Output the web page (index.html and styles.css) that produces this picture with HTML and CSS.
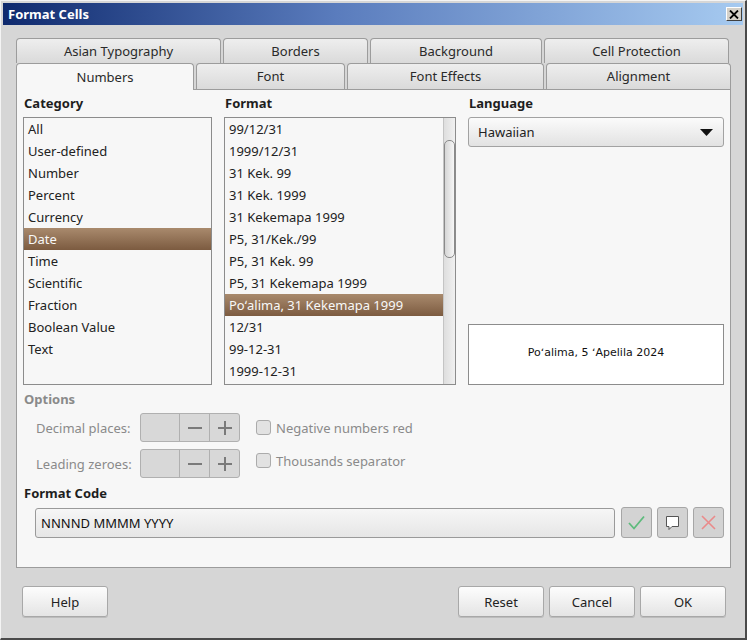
FILE: index.html
```html
<!DOCTYPE html>
<html lang="en">
<head>
  <meta charset="UTF-8">
  <title>Format Cells</title>
  <link rel="stylesheet" href="styles.css">
</head>
<body>
  <div class="window">
    <div class="titlebar">
      <span class="title">Format Cells</span>
      <div class="close">
        <svg width="10" height="9" viewBox="0 0 10 9"><path d="M1 0.5 L9 8.5 M9 0.5 L1 8.5" stroke="#000" stroke-width="1.8"/></svg>
      </div>
    </div>

    <div class="dialog">
      <div class="tabs">
        <div class="tab-row">
          <div class="tab w-asian">Asian Typography</div>
          <div class="tab w-borders">Borders</div>
          <div class="tab w-bg">Background</div>
          <div class="tab w-protect">Cell Protection</div>
        </div>
        <div class="tab-row front">
          <div class="tab active w-numbers">Numbers</div>
          <div class="tab w-font">Font</div>
          <div class="tab w-effects">Font Effects</div>
          <div class="tab w-align">Alignment</div>
        </div>
      </div>

      <div class="panel">
        <div class="columns">
          <div class="col col-cat">
            <div class="label">Category</div>
            <div class="list">
              <div class="rows">
                <div class="row">All</div>
                <div class="row">User-defined</div>
                <div class="row">Number</div>
                <div class="row">Percent</div>
                <div class="row">Currency</div>
                <div class="row selected">Date</div>
                <div class="row">Time</div>
                <div class="row">Scientific</div>
                <div class="row">Fraction</div>
                <div class="row">Boolean Value</div>
                <div class="row">Text</div>
              </div>
            </div>
          </div>

          <div class="col col-fmt">
            <div class="label">Format</div>
            <div class="list">
              <div class="rows">
                <div class="row">99/12/31</div>
                <div class="row">1999/12/31</div>
                <div class="row">31 Kek. 99</div>
                <div class="row">31 Kek. 1999</div>
                <div class="row">31 Kekemapa 1999</div>
                <div class="row">P5, 31/Kek./99</div>
                <div class="row">P5, 31 Kek. 99</div>
                <div class="row">P5, 31 Kekemapa 1999</div>
                <div class="row selected">Poʻalima, 31 Kekemapa 1999</div>
                <div class="row">12/31</div>
                <div class="row">99-12-31</div>
                <div class="row">1999-12-31</div>
              </div>
              <div class="scrollbar"><div class="thumb"></div></div>
            </div>
          </div>

          <div class="col col-lang">
            <div class="label">Language</div>
            <div class="dropdown">
              <span>Hawaiian</span>
              <svg width="13" height="7" viewBox="0 0 13 7"><path d="M0 0 H13 L6.5 7 Z" fill="#111"/></svg>
            </div>
            <div class="preview">Poʻalima, 5 ʻApelila 2024</div>
          </div>
        </div>

        <div class="label muted options-label">Options</div>
        <div class="opt-row">
          <span class="opt-label">Decimal places:</span>
          <div class="spin">
            <div class="spin-entry"></div>
            <div class="spin-btn"><svg width="14" height="14" viewBox="0 0 14 14"><path d="M0 7 H14" stroke="#7a7a7a" stroke-width="2"/></svg></div>
            <div class="spin-btn"><svg width="14" height="14" viewBox="0 0 14 14"><path d="M0 7 H14 M7 0 V14" stroke="#7a7a7a" stroke-width="2"/></svg></div>
          </div>
          <label class="check"><span class="box"></span>Negative numbers red</label>
        </div>
        <div class="opt-row">
          <span class="opt-label">Leading zeroes:</span>
          <div class="spin">
            <div class="spin-entry"></div>
            <div class="spin-btn"><svg width="14" height="14" viewBox="0 0 14 14"><path d="M0 7 H14" stroke="#7a7a7a" stroke-width="2"/></svg></div>
            <div class="spin-btn"><svg width="14" height="14" viewBox="0 0 14 14"><path d="M0 7 H14 M7 0 V14" stroke="#7a7a7a" stroke-width="2"/></svg></div>
          </div>
          <label class="check up"><span class="box"></span>Thousands separator</label>
        </div>

        <div class="label code-label">Format Code</div>
        <div class="code-row">
          <div class="code-entry">NNNND MMMM YYYY</div>
          <div class="icon-btn">
            <svg width="31" height="31" viewBox="0 0 31 31"><path d="M8 16 L13 21.5 L23 9.5" fill="none" stroke="#5dbb7c" stroke-width="1.8"/></svg>
          </div>
          <div class="icon-btn">
            <svg width="31" height="31" viewBox="0 0 31 31"><path d="M9.5 9.5 H21.5 V19.5 H15 L12 22.5 V19.5 H9.5 Z" fill="#fff" stroke="#555" stroke-width="1"/></svg>
          </div>
          <div class="icon-btn">
            <svg width="31" height="31" viewBox="0 0 31 31"><path d="M9 9 L22 22 M22 9 L9 22" stroke="#ea8a8a" stroke-width="1.6"/></svg>
          </div>
        </div>
      </div>

      <div class="footer">
        <div class="btn">Help</div>
        <div class="spacer"></div>
        <div class="btn">Reset</div>
        <div class="btn">Cancel</div>
        <div class="btn">OK</div>
      </div>
    </div>
  </div>
</body>
</html>
```

FILE: styles.css
```css
:root {
  --bg: #d6d6d6;
  --panel: #f7f7f7;
  --border: #9c9c9c;
  --text: #222222;
  --muted: #8a8a8a;
  --radius: 3px;
}

body {
  margin: 0;
  font-family: 'Noto Sans', 'DejaVu Sans', sans-serif;
  font-size: 13px;
  color: var(--text);
}

.window {
  width: 747px;
  height: 640px;
  box-sizing: border-box;
  background: var(--bg);
  border-top: 1px solid #f4f4f4;
  border-left: 1px solid #f4f4f4;
  border-right: 2px solid #4a4a4a;
  border-bottom: 2px solid #4a4a4a;
  padding: 2px 2px 0 2px;
  display: flex;
  flex-direction: column;
}

.titlebar {
  height: 22px;
  background: linear-gradient(to right, #0f2a6e, #5a7cbd 45%, #a6caf0);
  display: flex;
  align-items: center;
  justify-content: space-between;
  padding: 0 1px 0 5px;
}

.title {
  color: #ffffff;
  font-weight: bold;
  font-size: 13px;
}

.close {
  width: 16px;
  height: 14px;
  box-sizing: border-box;
  background: #d4d0c8;
  border-top: 1px solid #ffffff;
  border-left: 1px solid #ffffff;
  border-right: 1px solid #404040;
  border-bottom: 1px solid #404040;
  display: flex;
  align-items: center;
  justify-content: center;
}

.dialog {
  flex: 1;
  padding: 13px 12px 0 13px;
  display: flex;
  flex-direction: column;
}

/* tabs */
.tab-row {
  display: flex;
  gap: 2px;
}

.tab {
  height: 25px;
  box-sizing: border-box;
  border: 1px solid var(--border);
  border-bottom: none;
  border-radius: 4px 4px 0 0;
  background: linear-gradient(#eeeeee, #dadada);
  display: flex;
  align-items: center;
  justify-content: center;
  padding-bottom: 1px;
  color: #2a2a2a;
}

.front .tab {
  height: 26px;
}

.front .tab.active {
  height: 27px;
  margin-bottom: -1px;
  background: var(--panel);
  position: relative;
  z-index: 1;
}

.w-asian { width: 205px; }
.w-borders { width: 145px; }
.w-bg { width: 172px; }
.w-protect { width: 185px; }
.w-numbers { width: 178px; }
.w-font { width: 149px; }
.w-effects { width: 197px; }
.w-align { width: 185px; }

.panel {
  width: 715px;
  height: 479px;
  box-sizing: border-box;
  background: var(--panel);
  border: 1px solid var(--border);
  padding: 4px 6px 0 6px;
}

.label {
  font-weight: bold;
  line-height: 18px;
  color: #1e1e1e;
  padding-left: 1px;
  margin-bottom: 5px;
}

.label.muted {
  color: var(--muted);
}

.columns {
  display: flex;
  gap: 12px;
}

.col-cat { width: 189px; }
.col-fmt { width: 232px; }
.col-lang {
  width: 256px;
  display: flex;
  flex-direction: column;
}

.list {
  height: 268px;
  box-sizing: border-box;
  border: 1px solid #8c8c8c;
  background: var(--panel);
  display: flex;
  overflow: hidden;
}

.rows {
  flex: 1;
}

.row {
  height: 22px;
  line-height: 22px;
  padding-left: 4px;
  white-space: nowrap;
}

.row.selected {
  background: linear-gradient(#a98a6d, #7c5b40);
  color: #f8f8f8;
}

.scrollbar {
  width: 11px;
  border-left: 1px solid #c4c4c4;
  background: linear-gradient(to right, #dedede, #f0f0f0);
  padding-top: 22px;
}

.thumb {
  height: 118px;
  box-sizing: border-box;
  border: 1px solid #8a8a8a;
  border-radius: 5px;
  background: linear-gradient(to right, #d6d6d6, #f6f6f6);
}

.dropdown {
  height: 30px;
  box-sizing: border-box;
  border: 1px solid #a2a2a2;
  border-radius: var(--radius);
  background: linear-gradient(#fbfbfb, #e2e2e2);
  display: flex;
  align-items: center;
  justify-content: space-between;
  padding: 0 10px 0 9px;
}

.preview {
  margin-top: auto;
  height: 61px;
  box-sizing: border-box;
  border: 1px solid #8c8c8c;
  background: #ffffff;
  display: flex;
  align-items: center;
  justify-content: center;
  padding-bottom: 4px;
  font-family: 'DejaVu Sans', sans-serif;
  font-size: 11px;
  color: #111111;
}

/* options */
.options-label {
  margin-top: 5px;
}

.opt-row {
  display: flex;
  align-items: center;
  padding-left: 13px;
  height: 29px;
  margin-bottom: 7px;
}

.opt-label {
  width: 93px;
  margin-right: 11px;
  text-align: right;
  white-space: nowrap;
  color: var(--muted);
}

.spin {
  width: 100px;
  height: 29px;
  box-sizing: border-box;
  border: 1px solid #b0b0b0;
  border-radius: var(--radius);
  background: #d8d8d8;
  display: flex;
}

.spin-entry {
  width: 38px;
  border-right: 1px solid #b0b0b0;
}

.spin-btn {
  width: 29px;
  display: flex;
  align-items: center;
  justify-content: center;
}

.spin-btn + .spin-btn {
  border-left: 1px solid #b0b0b0;
  flex: 1;
}

.check {
  display: flex;
  align-items: center;
  margin-left: 16px;
  color: var(--muted);
}

.check.up {
  margin-top: -6px;
}

.box {
  width: 15px;
  height: 15px;
  box-sizing: border-box;
  border: 1px solid #ababab;
  border-radius: 3px;
  background: #e2e2e2;
  margin-right: 5px;
}

/* format code */
.code-label {
  margin-top: -1px;
  margin-bottom: 5px;
}

.code-row {
  display: flex;
  align-items: center;
  padding-left: 12px;
  gap: 5px;
}

.code-entry {
  width: 581px;
  height: 30px;
  box-sizing: border-box;
  border: 1px solid #9a9a9a;
  border-radius: var(--radius);
  background: linear-gradient(#f6f6f6, #e6e6e6);
  display: flex;
  align-items: center;
  padding-left: 5px;
  color: #111111;
  margin-right: 1px;
}

.icon-btn {
  width: 31px;
  height: 31px;
  box-sizing: border-box;
  border: 1px solid #a6a6a6;
  border-radius: var(--radius);
  background: #d3d3d3;
  display: flex;
  align-items: center;
  justify-content: center;
}

.icon-btn svg {
  margin: -1px;
}

/* footer */
.footer {
  display: flex;
  gap: 5px;
  margin: 18px 5px 0 6px;
}

.spacer {
  flex: 1;
}

.btn {
  width: 86px;
  height: 31px;
  box-sizing: border-box;
  border: 1px solid #a8a8a8;
  border-radius: var(--radius);
  background: linear-gradient(#fdfdfd, #e4e4e4);
  box-shadow: 0 1px 0 rgba(0, 0, 0, 0.12);
  display: flex;
  align-items: center;
  justify-content: center;
  color: #222222;
}
```
